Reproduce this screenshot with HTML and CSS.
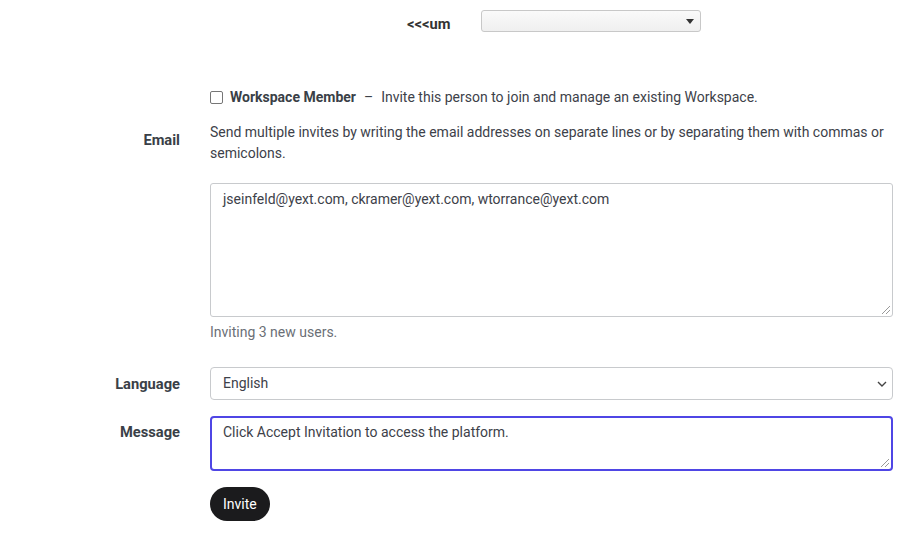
FILE: index.html
```html
<!DOCTYPE html>
<html>
<head>
<meta charset="utf-8">
<title>Invite Users</title>
<link rel="stylesheet" href="styles.css">
</head>
<body>

<div class="TopRow">
    <span class="TopLabel">&lt;&lt;&lt;um</span>
    <div class="TopSelect"><span class="TopArrow"></span></div>
</div>

<div class="Form">
    <div class="Label"></div>
    <div class="Field CheckRow">
        <span class="CheckBox"></span>
        <strong>Workspace Member</strong>
        <span class="Dash">&ndash;</span>
        <span>Invite this person to join and manage an existing Workspace.</span>
    </div>

    <div class="Label EmailLabel">Email</div>
    <div class="Field">
        <p class="Help">Send multiple invites by writing the email addresses on separate lines or by separating them with commas or semicolons.</p>
        <div class="TextBox EmailBox">jseinfeld@yext.com, ckramer@yext.com, wtorrance@yext.com<span class="Grip"></span></div>
        <p class="Note">Inviting 3 new users.</p>
    </div>

    <div class="Label LangLabel">Language</div>
    <div class="Field">
        <div class="SelectBox">English
            <svg class="Chevron" width="10" height="6" viewBox="0 0 10 6"><path d="M1 1 L5 5 L9 1" fill="none" stroke="#444" stroke-width="1.4"/></svg>
        </div>
    </div>

    <div class="Label MsgLabel">Message</div>
    <div class="Field">
        <div class="TextBox MsgBox">Click Accept Invitation to access the platform.<span class="Grip"></span></div>
        <button class="InviteButton">Invite</button>
    </div>
</div>

</body>
</html>
```

FILE: styles.css
```css
html, body {
    margin: 0;
    background: #fff;
    font-family: Roboto, "Liberation Sans", Arial, sans-serif;
    font-size: 14px;
    color: #3d4149;
}
.TopRow {
    display: flex;
    align-items: center;
    padding: 10px 0 0 407px;
    height: 22px;
}
.TopLabel {
    font-weight: bold;
    font-size: 14.7px;
    color: #333;
    width: 74px;
    margin-top: 6px;
}
.TopSelect {
    position: relative;
    width: 218px;
    height: 20px;
    border: 1px solid #c8c8c8;
    border-radius: 3px;
    background: linear-gradient(#fafafa, #efefef);
}
.TopArrow {
    position: absolute;
    right: 6px;
    top: 8px;
    border-left: 4px solid transparent;
    border-right: 4px solid transparent;
    border-top: 5px solid #333;
}
.Form {
    display: grid;
    grid-template-columns: 180px 683px;
    column-gap: 30px;
    margin-top: 57px;
}
.Label {
    text-align: right;
    font-weight: bold;
    font-size: 14.7px;
    line-height: 17px;
    color: #3a3f47;
}
.Field {
    min-width: 0;
}
.CheckRow {
    display: flex;
    align-items: center;
    height: 16px;
}
.CheckBox {
    display: inline-block;
    width: 11px;
    height: 11px;
    border: 1px solid #767676;
    border-radius: 2px;
    margin-right: 7px;
}
.CheckRow strong {
    color: #3a3f47;
}
.Dash {
    margin: 0 8px;
}
.EmailLabel {
    padding-top: 27px;
}
.Help {
    margin: 17px 0 0;
    line-height: 21px;
}
.TextBox {
    position: relative;
    box-sizing: border-box;
    border: 1px solid #c8cacd;
    border-radius: 3px;
    padding: 7px 12px;
    line-height: 17px;
    color: #3d4149;
}
.EmailBox {
    margin-top: 19px;
    height: 134px;
}
.Grip {
    position: absolute;
    right: 2px;
    bottom: 2px;
    width: 10px;
    height: 10px;
    background: repeating-linear-gradient(135deg, transparent 0 2px, #999 2px 3px);
    clip-path: polygon(100% 0, 100% 100%, 0 100%);
}
.Note {
    margin: 7px 0 0;
    line-height: 17px;
    color: #6b6f76;
}
.LangLabel {
    padding-top: 35px;
}
.SelectBox {
    position: relative;
    box-sizing: border-box;
    margin-top: 26px;
    height: 33px;
    border: 1px solid #c8cacd;
    border-radius: 4px;
    padding: 0 12px;
    line-height: 31px;
}
.Chevron {
    position: absolute;
    right: 5px;
    top: 13px;
}
.MsgLabel {
    padding-top: 24px;
}
.MsgBox {
    margin-top: 16px;
    height: 55px;
    border: 2px solid #4f46e5;
    border-radius: 4px;
    padding: 6px 11px;
}
.InviteButton {
    display: block;
    margin-top: 16px;
    height: 34px;
    padding: 0 13px;
    border: none;
    border-radius: 17px;
    background: #1b1b1d;
    color: #fff;
    font-family: Roboto, "Liberation Sans", Arial, sans-serif;
    font-size: 14px;
}
```
